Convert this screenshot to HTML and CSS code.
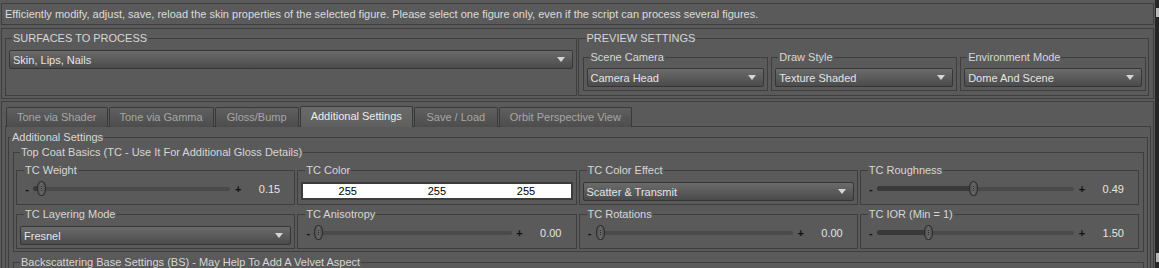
FILE: index.html
```html
<!DOCTYPE html>
<html lang="en">
<head>
	<meta charset="UTF-8">
	<title>Skin Properties</title>
	<link rel="stylesheet" href="styles.css">
</head>
<body>
<div class="window">
	<div class="main">
		<div class="frame desc">Efficiently modify, adjust, save, reload the skin properties of the selected figure. Please select one figure only, even if the script can process several figures.</div>

		<div class="frame top-panel">
			<fieldset class="box surfaces">
				<legend>SURFACES TO PROCESS</legend>
				<div class="combo"><span>Skin, Lips, Nails</span></div>
			</fieldset>
			<fieldset class="box preview">
				<legend>PREVIEW SETTINGS</legend>
				<div class="preview-row">
					<fieldset class="box sub">
						<legend>Scene Camera</legend>
						<div class="combo"><span>Camera Head</span></div>
					</fieldset>
					<fieldset class="box sub">
						<legend>Draw Style</legend>
						<div class="combo"><span>Texture Shaded</span></div>
					</fieldset>
					<fieldset class="box sub">
						<legend>Environment Mode</legend>
						<div class="combo"><span>Dome And Scene</span></div>
					</fieldset>
				</div>
			</fieldset>
		</div>

		<div class="frame tabs-frame">
			<div class="tabbar">
				<div class="tab">Tone via Shader</div>
				<div class="tab">Tone via Gamma</div>
				<div class="tab">Gloss/Bump</div>
				<div class="tab active">Additional Settings</div>
				<div class="tab">Save / Load</div>
				<div class="tab">Orbit Perspective View</div>
			</div>
			<div class="pane">
				<fieldset class="box additional">
					<legend>Additional Settings</legend>

					<fieldset class="box group">
						<legend>Top Coat Basics (TC - Use It For Additional Gloss Details)</legend>
						<div class="param-grid">
							<fieldset class="box param">
								<legend>TC Weight</legend>
								<div class="slider" style="--v: 0.02">
									<span class="minus">-</span>
									<div class="track"><div class="fill"></div><div class="knob"></div></div>
									<span class="plus">+</span>
									<span class="val">0.15</span>
								</div>
							</fieldset>
							<fieldset class="box param">
								<legend>TC Color</legend>
								<div class="color-field"><span>255</span><span>255</span><span>255</span></div>
							</fieldset>
							<fieldset class="box param">
								<legend>TC Color Effect</legend>
								<div class="combo"><span>Scatter &amp; Transmit</span></div>
							</fieldset>
							<fieldset class="box param">
								<legend>TC Roughness</legend>
								<div class="slider" style="--v: 0.49">
									<span class="minus">-</span>
									<div class="track"><div class="fill"></div><div class="knob"></div></div>
									<span class="plus">+</span>
									<span class="val">0.49</span>
								</div>
							</fieldset>

							<fieldset class="box param">
								<legend>TC Layering Mode</legend>
								<div class="combo"><span>Fresnel</span></div>
							</fieldset>
							<fieldset class="box param">
								<legend>TC Anisotropy</legend>
								<div class="slider" style="--v: 0">
									<span class="minus">-</span>
									<div class="track"><div class="fill"></div><div class="knob"></div></div>
									<span class="plus">+</span>
									<span class="val">0.00</span>
								</div>
							</fieldset>
							<fieldset class="box param">
								<legend>TC Rotations</legend>
								<div class="slider" style="--v: 0">
									<span class="minus">-</span>
									<div class="track"><div class="fill"></div><div class="knob"></div></div>
									<span class="plus">+</span>
									<span class="val">0.00</span>
								</div>
							</fieldset>
							<fieldset class="box param">
								<legend>TC IOR (Min = 1)</legend>
								<div class="slider" style="--v: 0.25">
									<span class="minus">-</span>
									<div class="track"><div class="fill"></div><div class="knob"></div></div>
									<span class="plus">+</span>
									<span class="val">1.50</span>
								</div>
							</fieldset>
						</div>
					</fieldset>

					<fieldset class="box group backscatter">
						<legend>Backscattering Base Settings (BS) - May Help To Add A Velvet Aspect</legend>
					</fieldset>
				</fieldset>
			</div>
		</div>
	</div>
	<div class="scrollbar">
		<div class="grip top"></div>
		<div class="grip bottom"></div>
	</div>
</div>
</body>
</html>
```

FILE: styles.css
```css
*{
	margin: 0;
	padding: 0;
	box-sizing: border-box;
}
body{
	background-color: #5a5a5a;
	font-family: "Liberation Sans", Arial, sans-serif;
	font-size: 11px;
	color: #dcdcdc;
	overflow: hidden;
}
.window{
	display: flex;
	height: 268px;
	overflow: hidden;
}
.main{
	flex: 1;
	min-width: 0;
	padding: 3px 1px 0 1px;
}
.scrollbar{
	width: 4px;
	background-color: #262626;
	display: flex;
	flex-direction: column;
}
.grip{
	width: 3px;
	height: 9px;
	margin-left: 1px;
	background-color: #b8b8b8;
}
.grip.top{
	margin-top: 8px;
}
.grip.bottom{
	margin-top: auto;
	margin-bottom: 6px;
}

/* frames and group boxes */
.frame{
	border: 1px solid #3e3e3e;
}
.desc{
	height: 22px;
	line-height: 20px;
	padding-left: 3px;
	white-space: nowrap;
}
.top-panel{
	margin-top: 3px;
	display: flex;
	gap: 1px;
	padding: 3px 4px 2px 3px;
}
.box{
	border: 1px solid #3e3e3e;
	min-width: 0;
}
.box > legend{
	line-height: 13px;
	padding: 0 1px;
	margin-left: 3px;
	color: #d6d6d6;
	white-space: nowrap;
}
.surfaces{
	flex: 1 1 0;
	padding: 5px 3px 3px 3px;
}
.preview{
	flex: 1 1 0;
	padding: 6px 2px 4px 4px;
}
.preview-row{
	display: flex;
	gap: 3px;
}
.sub{
	flex: 1 1 0;
	padding: 4px 3px 3px 3px;
}

/* combo box */
.combo{
	height: 19px;
	border: 1px solid #363636;
	border-radius: 2px;
	background: linear-gradient(#6b6b6b, #4b4b4b);
	display: flex;
	align-items: center;
	justify-content: space-between;
	padding: 0 7px 0 3px;
	color: #e4e4e4;
	white-space: nowrap;
}
.combo::after{
	content: "";
	border-left: 4px solid transparent;
	border-right: 4px solid transparent;
	border-top: 5px solid #d6d6d6;
}

/* tabs */
.tabs-frame{
	margin-top: 2px;
	padding: 5px 2px 0 2px;
	height: 200px;
}
.tabbar{
	display: flex;
	align-items: flex-end;
	height: 20px;
	padding-left: 2px;
}
.tab{
	height: 20px;
	min-width: 84px;
	padding: 0 10px;
	margin-right: 1px;
	border: 1px solid #393939;
	border-bottom: none;
	border-radius: 2px 2px 0 0;
	background: linear-gradient(#5f5f5f, #4d4d4d);
	color: #a6a6a6;
	line-height: 18px;
	text-align: center;
	white-space: nowrap;
}
.tab.active{
	height: 21px;
	background: linear-gradient(#6a6a6a, #5f5f5f);
	color: #ececec;
}
.pane{
	margin: -1px 0 0 1px;
	border: 1px solid #3e3e3e;
	padding: 4px 2px 0 2px;
	height: 200px;
}
.additional{
	padding: 2px 3px 0 4px;
	height: 200px;
}
.additional > legend{
	margin-left: -2px;
}
.group{
	padding: 5px 4px 2px 2px;
}
.group > legend{
	margin-left: 4px;
}
.backscatter{
	margin-top: 4px;
	height: 60px;
}

/* parameter grid */
.param-grid{
	display: grid;
	grid-template-columns: repeat(4, 1fr);
	gap: 3px 2px;
}
.param{
	padding: 4px 3px 3px 3px;
}
.param > legend{
	margin-left: 4px;
}
.param .combo{
	margin-top: 1px;
}
.color-field{
	margin-top: 1px;
	height: 18px;
	border: 2px solid #3c3c3c;
	background-color: #fff;
	display: grid;
	grid-template-columns: repeat(3, 1fr);
	text-align: center;
	line-height: 14px;
	color: #000;
}

/* slider */
.slider{
	display: flex;
	align-items: center;
	height: 15px;
	padding: 0 11px 0 3px;
}
.minus, .plus{
	width: 8px;
	text-align: center;
	font-weight: bold;
	color: #111;
}
.track{
	flex: 1;
	position: relative;
	height: 15px;
	margin: 0 4px 0 2px;
}
.track::before{
	content: "";
	position: absolute;
	left: 0;
	right: 0;
	top: 6px;
	height: 4px;
	border-radius: 2px;
	background-color: #4a4a4a;
}
.fill{
	position: absolute;
	left: 0;
	top: 5px;
	height: 5px;
	border-radius: 3px;
	background-color: #393939;
	width: calc(var(--v) * (100% - 9px) + 5px);
}
.knob{
	position: absolute;
	top: 0;
	left: calc(var(--v) * (100% - 9px));
	width: 9px;
	height: 15px;
	border: 1px solid #2e2e2e;
	border-radius: 5px / 7px;
	background: linear-gradient(90deg, #4f4f4f, #686868 50%, #4f4f4f);
}
.knob::after{
	content: "";
	position: absolute;
	left: 3px;
	top: 4px;
	height: 5px;
	border-left: 1px dotted #2b2b2b;
}
.val{
	width: 38px;
	text-align: right;
	color: #e4e4e4;
}
```
